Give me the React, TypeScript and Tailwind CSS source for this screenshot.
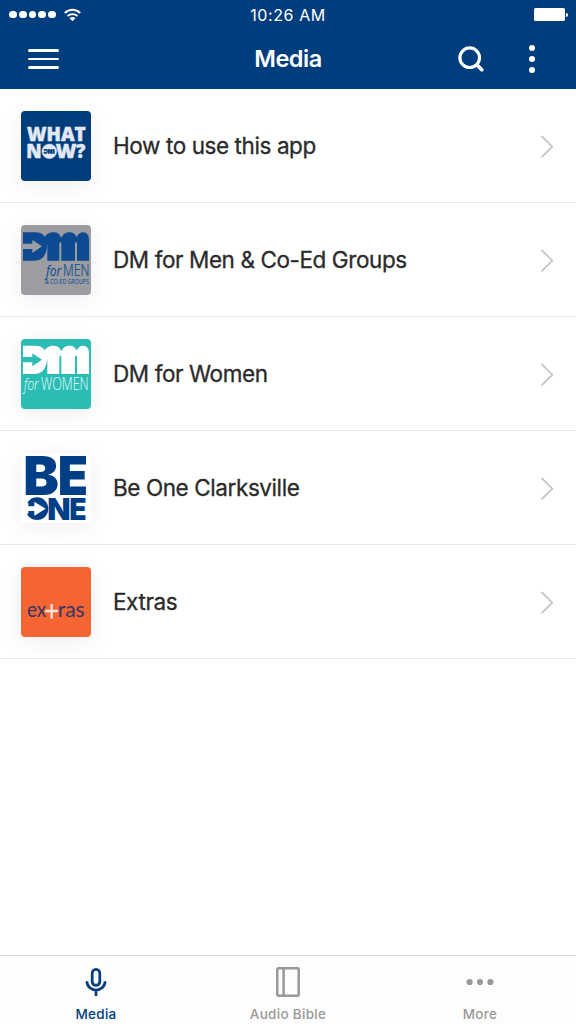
import type { ReactNode } from "react";
import { clsx } from "clsx";

const NAVY = "#003d7d";

function DmMark({ fill }: { fill: string }) {
  return (
    <g fill={fill}>
      {/* "d" with the arrow cut into it */}
      <path d="M38 52H74C94 52 105 62 108 78C111 90 111 102 106 113C100 129 90 137 72 137H38V102H66V114L95 94L66 75V86H38Z" />
      {/* "m" */}
      <path d="M102 68C108 56 118 52 130 52C142 52 149 58 153 69C158 57 167 52 178 52C189 52 196 58 199 67C203 57 210 52 218 52C230 52 236 60 236 76V137H200V88C200 79 194 79 194 88V137H153V88C153 79 147 79 147 88V137H111V94Z" />
    </g>
  );
}

function WhatNowArt() {
  return (
    <svg viewBox="32 32 210 210" className="size-full bg-[#003d7d]">
      <g fill="#e3e9f4" fontFamily="Open Sans" fontWeight="800" fontSize="59" stroke="#e3e9f4" strokeWidth="1.5">
        <text x="50" y="123" textLength="176" lengthAdjust="spacingAndGlyphs">WHAT</text>
        <text x="48" y="174" textLength="46" lengthAdjust="spacingAndGlyphs">N</text>
        <text x="136" y="174" textLength="62" lengthAdjust="spacingAndGlyphs">W</text>
        <text x="197" y="174" textLength="28" lengthAdjust="spacingAndGlyphs">?</text>
        <circle cx="117" cy="153" r="22" />
      </g>
      <g transform="translate(94 137) scale(.165 .17)">
        <DmMark fill={NAVY} />
      </g>
    </svg>
  );
}

function MenArt() {
  return (
    <svg viewBox="32 30 210 210" className="size-full bg-[#9b9da0]">
      <DmMark fill="#0d4a92" />
      <g fill="#0d4a92" fontFamily="Open Sans">
        <text x="107" y="182" fontSize="43" fontStyle="italic" textLength="46" lengthAdjust="spacingAndGlyphs">for</text>
        <text x="158" y="184" fontSize="50" fontWeight="300" stroke="#0d4a92" strokeWidth=".7" textLength="79" lengthAdjust="spacingAndGlyphs">MEN</text>
        <text x="104" y="208" fontSize="24" textLength="132" lengthAdjust="spacingAndGlyphs">{"& CO-ED GROUPS"}</text>
      </g>
    </svg>
  );
}

function WomenArt() {
  return (
    <svg viewBox="32 27 210 210" className="size-full bg-[#2bbcb3]">
      <g transform="translate(0 -5)">
        <DmMark fill="#ffffff" />
      </g>
      <g fill="#e6fffb" fontFamily="Open Sans" fontWeight="300">
        <text x="41" y="181" fontSize="48" fontStyle="italic" textLength="44" lengthAdjust="spacingAndGlyphs">for</text>
        <text x="92" y="181" fontSize="54" textLength="143" lengthAdjust="spacingAndGlyphs">WOMEN</text>
      </g>
    </svg>
  );
}

function BeOneArt() {
  return (
    <svg viewBox="32 32 210 210" className="size-full bg-white">
      <g fill="#003f86" fontFamily="Inter" fontWeight="900">
        <text x="39" y="157" fontSize="162" textLength="107" lengthAdjust="spacingAndGlyphs">B</text>
        <text x="142" y="157" fontSize="162" textLength="91" lengthAdjust="spacingAndGlyphs">E</text>
        <text x="111" y="232" fontSize="90" textLength="70" lengthAdjust="spacingAndGlyphs">N</text>
        <text x="177" y="232" fontSize="90" textLength="52" lengthAdjust="spacingAndGlyphs">E</text>
        <ellipse cx="80" cy="199" rx="34" ry="34" />
      </g>
      <path d="M42 182H54V192H72V178L106 199L72 220V206H54V214H42Z" fill="#fff" />
    </svg>
  );
}

function ExtrasArt() {
  return (
    <svg viewBox="32 32 210 210" className="size-full bg-[#f46533]">
      <g fill="#343465" fontFamily="Lato" fontSize="65">
        <text x="50" y="183" textLength="58" lengthAdjust="spacingAndGlyphs">ex</text>
        <text x="142" y="183" textLength="81" lengthAdjust="spacingAndGlyphs">ras</text>
      </g>
      <path d="M124 143V187M105 164H143" stroke="#fde3d8" strokeWidth="7" />
    </svg>
  );
}

const items: { title: string; art: ReactNode }[] = [
  { title: "How to use this app", art: <WhatNowArt /> },
  { title: "DM for Men & Co-Ed Groups", art: <MenArt /> },
  { title: "DM for Women", art: <WomenArt /> },
  { title: "Be One Clarksville", art: <BeOneArt /> },
  { title: "Extras", art: <ExtrasArt /> },
];

function StatusBar() {
  return (
    <div className="grid h-[29px] grid-cols-3 items-center">
      <div className="flex items-center gap-[2px] pl-[9px]">
        {[0, 1, 2, 3, 4].map((n) => (
          <span key={n} className="size-[7.8px] rounded-full bg-white" />
        ))}
        <svg width="17" height="14" viewBox="0 0 17 14" fill="none" stroke="white" strokeWidth="1.9" className="ml-[6px]">
          <path d="M.8 5C5 .6 12 .6 16.2 5M3.5 8.2C6.3 5.4 10.7 5.4 13.5 8.2" />
          <path d="M5.5 10.2C7.2 8.7 9.8 8.7 11.5 10.2L8.5 13.2Z" fill="white" stroke="none" />
        </svg>
      </div>
      <p className="text-center text-base leading-none tracking-[0.6px]">10:26 AM</p>
      <div className="flex items-center justify-end pr-[8px]">
        <span className="h-[13.5px] w-[31px] rounded-[1.5px] bg-white" />
        <span className="ml-px h-[4px] w-[2px] rounded-r-full bg-white" />
      </div>
    </div>
  );
}

function Header() {
  return (
    <header className="h-[89px] shrink-0 bg-[#003d7d] text-white">
      <StatusBar />
      <div className="grid h-[60px] grid-cols-3 items-center">
        <button aria-label="Menu" className="ml-[28px] flex w-[31px] flex-col gap-[5.7px]">
          <span className="h-[2.7px] rounded-full bg-white" />
          <span className="h-[2.7px] rounded-full bg-white" />
          <span className="h-[2.7px] rounded-full bg-white" />
        </button>
        <h1 className="text-center text-[23.5px] font-semibold tracking-[-0.5px]">Media</h1>
        <div className="flex items-center justify-end gap-[46px] pr-[41px]">
          <svg width="26" height="26" viewBox="0 0 26 26" fill="none" stroke="white" strokeLinecap="round">
            <circle cx="11.7" cy="11.7" r="9.8" strokeWidth="3.2" />
            <path d="M19 19L23.8 23.8" strokeWidth="3.6" />
          </svg>
          <svg width="6" height="28" viewBox="0 0 6 28" fill="white" className="-ml-px">
            <circle cx="3" cy="3" r="3" />
            <circle cx="3" cy="14" r="3" />
            <circle cx="3" cy="25" r="3" />
          </svg>
        </div>
      </div>
    </header>
  );
}

function TabBar() {
  const tabs = [
    {
      label: "Media",
      icon: (
        <svg width="22" height="30" viewBox="0 0 22 30" fill="none" stroke="currentColor" strokeWidth="2.7">
          <rect x="7.2" y="2.3" width="7.6" height="16" rx="3.8" />
          <path d="M1.9 14.3C1.9 19.5 6 23 11 23S20.1 19.5 20.1 14.3M11 23V29" />
        </svg>
      ),
    },
    {
      label: "Audio Bible",
      icon: (
        <svg width="24" height="30" viewBox="0 0 24 30" fill="none" stroke="currentColor" strokeWidth="2.5">
          <rect x="1.3" y="1.3" width="21.4" height="27.4" rx="1" />
          <path d="M7.6 1V29" />
        </svg>
      ),
    },
    {
      label: "More",
      icon: (
        <svg width="28" height="30" viewBox="0 0 28 30" fill="currentColor">
          <circle cx="3.6" cy="15" r="3.1" />
          <circle cx="14" cy="15" r="3.1" />
          <circle cx="24.4" cy="15" r="3.1" />
        </svg>
      ),
    },
  ];

  return (
    <nav className="grid h-[69px] shrink-0 grid-cols-3 border-t border-[#d9d9d9] bg-[#fdfdfd]">
      {tabs.map((tab, i) => (
        <button
          key={tab.label}
          className={clsx("flex flex-col items-center pt-[11px]", i === 0 ? "text-[#003d7d]" : "text-[#999]")}
        >
          {tab.icon}
          <span className="mt-[7px] text-[13.5px] leading-[20px] font-medium tracking-[0.3px]">{tab.label}</span>
        </button>
      ))}
    </nav>
  );
}

export default function App() {
  return (
    <div className="flex h-screen w-full flex-col bg-white font-['Inter',sans-serif]">
      <Header />
      <main className="flex-1">
        {items.map((item) => (
          <a key={item.title} className="flex h-[114px] items-center border-b border-[#e8e8e8] pl-[20.5px] pr-[22px]">
            <div className="size-[70px] overflow-hidden rounded-[4px] shadow-[0_4px_22px_rgba(0,0,0,0.07)]">
              {item.art}
            </div>
            <span className="ml-[22.5px] flex-1 text-[22.5px] tracking-[-0.41px] text-[#2b2b2b] [-webkit-text-stroke:0.3px_#2b2b2b]">
              {item.title}
            </span>
            <svg width="14" height="24" viewBox="0 0 14 24" fill="none" stroke="#c6c6cb" strokeWidth="1.8">
              <path d="M1.5 2L12.3 12.7L1.5 23.4" />
            </svg>
          </a>
        ))}
      </main>
      <TabBar />
    </div>
  );
}
